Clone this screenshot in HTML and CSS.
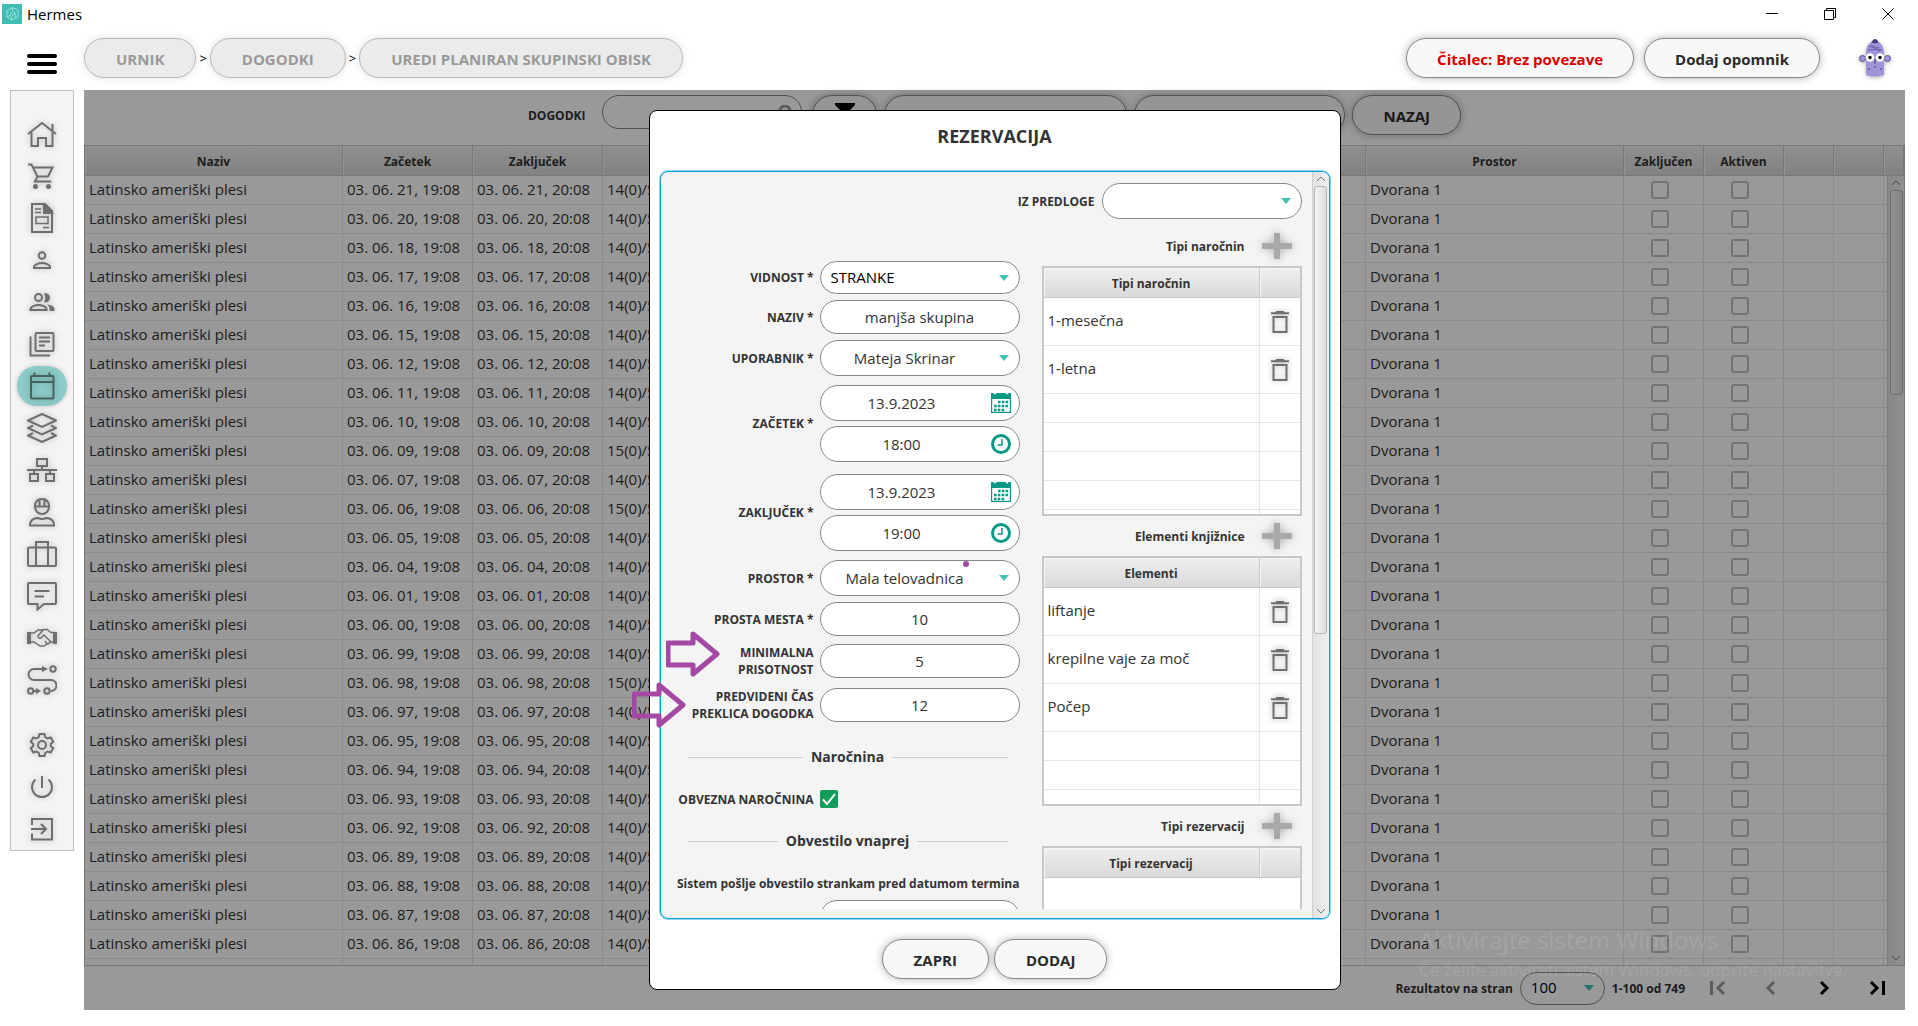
FILE: index.html
```html
<!doctype html>
<html lang="sl">
<head>
  <meta charset="UTF-8">
  <title>Hermes</title>
  <meta name="viewport" content="width=device-width, initial-scale=1">
  <link rel="stylesheet" href="styles.css">
</head>
<body>

  <!-- icons -->
  <svg class="sprite" aria-hidden="true">
    <symbol id="trash" viewBox="0 0 18 22">
      <path d="M0 1.2h5V0h8v1.2h5v2H0z" fill="#6e6e6e"/>
      <path d="M2.5 6h13v15h-13z" fill="none" stroke="#6e6e6e" stroke-width="2"/>
    </symbol>
    <symbol id="plus" viewBox="0 0 30 26">
      <path d="M12 0h6v26h-6z" fill="#a9a9a9"/>
      <rect y="10" width="30" height="6" rx="1" fill="#a9a9a9"/>
    </symbol>
    <symbol id="date" viewBox="0 0 20 20">
      <path d="M0 0h2.5a1.4 1.4 0 0 0 2.8 0h9.4a1.4 1.4 0 0 0 2.8 0H20v20H0z" fill="#069a85"/>
      <path d="M1.2 6h17.6v12.8H1.2z" fill="#fff"/>
      <path d="M7 9h11M3 13h15M3 17h11" stroke="#069a85" stroke-width="2.6" stroke-dasharray="2.6 1.2"/>
    </symbol>
    <symbol id="time" viewBox="0 0 20 20">
      <circle cx="10" cy="10" r="8.5" fill="none" stroke="#069a85" stroke-width="3"/>
      <path d="M11 5v6H6.500" fill="none" stroke="#069a85" stroke-width="1.500"/>
    </symbol>
  </svg>

  <header class="titlebar">
    <svg class="logo" viewBox="0 0 20 20">
      <path d="M0 0h20v20H0z" fill="#3fbdb5"/>
      <path d="M10.500 3.500L16 6v7l-3 1.500V9l-2.500-2zM10.500 3.500L5 6.500V13l4-2V8M5 13l4.500 3v-3.500L13 9M9.500 16l3-1.500" fill="none" stroke="#b4e6e3" stroke-width=".8"/>
    </svg>
    <span class="app-name">Hermes</span>
    <button type="button" class="win" aria-label="Pomanjšaj"><svg viewBox="0 0 12 12"><path d="M0 5.500h12"/></svg></button>
    <button type="button" class="win" aria-label="Obnovi"><svg viewBox="0 0 12 12"><path d="M.5 2.500h9v9h-9zM2.500 2.500v-2h9v9h-2"/></svg></button>
    <button type="button" class="win" aria-label="Zapri okno"><svg viewBox="0 0 12 12"><path d="M.5.5l11 11M11.500.5l-11 11"/></svg></button>
  </header>

  <div class="topbar">
    <button type="button" class="burger" aria-label="Meni"><i></i><i></i><i></i></button>
    <nav class="crumbs">
      <button type="button" class="pill" disabled>URNIK</button>
      <span>&gt;</span>
      <button type="button" class="pill" disabled>DOGODKI</button>
      <span>&gt;</span>
      <button type="button" class="pill" disabled>UREDI PLANIRAN SKUPINSKI OBISK</button>
    </nav>
    <button type="button" class="pill alert">Čitalec: Brez povezave</button>
    <button type="button" class="pill">Dodaj opomnik</button>
    <svg class="avatar" viewBox="0 0 32 38">
      <circle cx="3.500" cy="19.500" r="3" fill="#a093d8" stroke="#5b4f96"/>
      <circle cx="28.500" cy="19.500" r="3" fill="#a093d8" stroke="#5b4f96"/>
      <path d="M7 36V14C7 7 11 2 16 2s9 5 9 12v22q-9 3-18 0z" fill="#a093d8"/>
      <path d="M12.500 3.500Q14 0 16 0t3.500 3.500q-3.500 1.500-7 0z" fill="#463c7c"/>
      <path d="M9 7q6 1 12 5M9 11q7-1 14 0M12 6q5 3 8 3" fill="none" stroke="#6a5da8"/>
      <circle cx="11" cy="18.500" r="4.300" fill="#fff"/>
      <circle cx="21" cy="18.500" r="4.300" fill="#fff"/>
      <circle cx="11" cy="18.500" r="1.700"/>
      <circle cx="21" cy="18.500" r="1.700"/>
      <path d="M16 20v5M15 28h2M9 29l2 2M23 29l-2 2" stroke="#463c7c"/>
    </svg>
  </div>

  <div class="layout">
    <nav class="sidebar">
      <a href="#" aria-label="Domov"><svg viewBox="0 0 30 30"><path d="M1 15L15 4l14 11M4.500 13.500V27H11v-8h8v8h6.500V13.500M25.500 5v7"/></svg></a>
      <a href="#" aria-label="Trgovina"><svg viewBox="0 0 30 30"><path d="M1 3.500h3.500l6 12H21L25.500 6.500H6.500M10.500 15.500L8 20.500h16.500"/><circle class="fill" cx="8.500" cy="25.500" r="1.500"/><circle class="fill" cx="21.500" cy="25.500" r="1.500"/></svg></a>
      <a href="#" aria-label="Računi"><svg viewBox="0 0 30 30"><path d="M5 1h13l7 7v21H5z"/><path class="fill" d="M17 1v9h8z"/><path d="M8 6h6M8 9.500h6M9 14h12v6.500H9zM16 24.500h6" stroke-width="1.500"/></svg></a>
      <a href="#" aria-label="Stranka"><svg viewBox="0 0 30 30"><circle cx="15" cy="10.500" r="3.300"/><path d="M7 23v-1c0-2.500 5-4 8-4s8 1.500 8 4v1z"/></svg></a>
      <a href="#" aria-label="Stranke"><svg viewBox="0 0 30 30"><circle cx="11.500" cy="10.500" r="3.500"/><path d="M3.500 23v-1c0-2.500 5-4 8-4s8 1.500 8 4v1z"/><path class="fill" d="M17 6.500a4.500 4.500 0 1 1 0 8.500q2.500-4 0-8.500zM20.500 17.500c4 .5 7 2.500 7 4.500v2h-5q.5-4-2-6.500z" stroke="none"/></svg></a>
      <a href="#" aria-label="Knjižnica"><svg viewBox="0 0 30 30"><rect x="8.500" y="4" width="18" height="18" rx="1"/><path d="M3.500 7.500V26.500h19.500M12 8.500h11M12 12.500h11M12 16.500h6"/></svg></a>
      <a href="#" class="active" aria-label="Urnik"><svg viewBox="0 0 30 30"><rect x="4" y="5" width="22.500" height="22.500" rx="1"/><path d="M4 11h22.500M7.500 5V1.500M22.500 5V1.500"/></svg></a>
      <a href="#" aria-label="Sloji"><svg viewBox="0 0 30 30"><path d="M15 1l14 6.500L15 14 1 7.500zM6 12.500L1 15l14 6.500L29 15l-5-2.500M6 20l-5 2.500L15 29l14-6.500-5-2.500"/></svg></a>
      <a href="#" aria-label="Struktura"><svg viewBox="0 0 30 30"><path d="M10 4h10v7H10zM15 11v4M0 15h30M7 15v4M23 15v4M3 19h8v7H3zM19 19h8v7h-8z"/></svg></a>
      <a href="#" aria-label="Delavci"><svg viewBox="0 0 30 30"><path d="M8 10a7 7 0 1 0 14 0M7 9.500h16M8 9.500C8 4 11 2 15 2s7 2 7 7.500M12.500 3v6M17.500 3v6M3 28.500c0-5 2-7.500 8-7.500q4 2 8 0c6 0 8 2.500 8 7.500z"/></svg></a>
      <a href="#" aria-label="Paketi"><svg viewBox="0 0 30 30"><rect x="1" y="8.500" width="28" height="18.500" rx="1"/><path d="M9 27V3h12v24"/></svg></a>
      <a href="#" aria-label="Sporočila"><svg viewBox="0 0 30 30"><path d="M2 2h26a1 1 0 0 1 1 1v19a1 1 0 0 1-1 1H17l-6.500 5.500V23H2a1 1 0 0 1-1-1V3a1 1 0 0 1 1-1zM7.500 10h15M7.500 15.500h9.500"/></svg></a>
      <a href="#" aria-label="Partnerji"><svg viewBox="0 0 30 30"><path class="fill" d="M0 9h4v12H0zM26 9h4v12h-4z" stroke="none"/><path d="M4 10h3l4-3h5l-5 6q0 3 3 2l3-3 6 6q0 3-3 3l-3 2h-4l-6-4H4M14 8l3-1.500h3l4 3h3M18 18l2 3M26 19h-3" stroke-width="1.500"/></svg></a>
      <a href="#" aria-label="Proces"><svg viewBox="0 0 30 30"><path d="M17 4H7a5.500 5.500 0 0 0 0 11h17a5.500 5.500 0 0 1 0 11M7 26h3"/><circle cx="26" cy="4" r="2.700"/><circle cx="3.700" cy="26" r="2.700"/><circle cx="20" cy="26" r="2.700"/><path class="fill" d="M15 1l6 3-6 3zM9 23l5 3-5 3z" stroke="none"/></svg></a>
      <a href="#" class="lower" aria-label="Nastavitve"><svg viewBox="0 0 30 30"><path d="M12.500 4h5l.8 3.200 2.200 1.300 3.200-1 2.500 4.300-2.400 2.200v2l2.400 2.200-2.500 4.300-3.200-1-2.200 1.300-.8 3.200h-5l-.8-3.200-2.200-1.300-3.200 1-2.500-4.300L6.200 16v-2l-2.400-2.200 2.500-4.300 3.200 1 2.200-1.300z"/><circle cx="15" cy="15" r="4"/></svg></a>
      <a href="#" aria-label="Izklop"><svg viewBox="0 0 30 30"><path d="M15 4v12M8.500 7.500a10 10 0 1 0 13 0"/></svg></a>
      <a href="#" aria-label="Odjava"><svg viewBox="0 0 30 30"><path d="M5 11V5h20v20.500H5v-6M4 15h15M14 10l5 5-5 5"/></svg></a>
    </nav>

    <main class="content">
      <div class="toolbar">
        <label class="label" for="search">DOGODKI</label>
        <span class="search">
          <input type="text" id="search">
          <svg viewBox="0 0 16 16"><circle cx="8" cy="6" r="5"/><path d="M11 10l4 5"/></svg>
        </span>
        <button type="button" class="pill filter" aria-label="Filter"><svg viewBox="0 0 20 20"><path d="M0 0h20v2l-8 8v8l-4-3v-5L0 2z"/></svg></button>
        <button type="button" class="pill wide" aria-label="Stanje"></button>
        <button type="button" class="pill mid" aria-label="Izvoz"></button>
        <button type="button" class="pill">NAZAJ</button>
      </div>

      <div class="events">
        <table>
          <colgroup>
            <col class="c-name"><col class="c-time"><col class="c-time"><col><col class="c-name">
            <col class="c-check"><col class="c-check"><col class="c-tool"><col class="c-tool"><col class="c-end">
          </colgroup>
          <thead>
            <tr>
              <th>Naziv</th><th>Začetek</th><th>Zaključek</th><th></th><th>Prostor</th>
              <th>Zaključen</th><th>Aktiven</th><th></th><th></th><th></th>
            </tr>
          </thead>
          <tbody id="rows"></tbody>
        </table>
        <div class="scrollbar">
          <svg viewBox="0 0 10 6"><path d="M1 5l4-4 4 4"/></svg>
          <div class="thumb"></div>
          <svg viewBox="0 0 10 6"><path d="M1 1l4 4 4-4"/></svg>
        </div>
      </div>

      <div class="pager">
        <label class="label" for="per-page">Rezultatov na stran</label>
        <span class="select small"><select id="per-page"><option>100</option></select></span>
        <span class="label">1-100 od 749</span>
        <button type="button" disabled aria-label="Prva stran"><svg viewBox="0 0 16 16"><path d="M1.500 1v14M14 2L8 8l6 6"/></svg></button>
        <button type="button" disabled aria-label="Prejšnja stran"><svg viewBox="0 0 16 16"><path d="M11 2L5 8l6 6"/></svg></button>
        <button type="button" aria-label="Naslednja stran"><svg viewBox="0 0 16 16"><path d="M5 2l6 6-6 6"/></svg></button>
        <button type="button" aria-label="Zadnja stran"><svg viewBox="0 0 16 16"><path d="M14.500 1v14M2 2l6 6-6 6"/></svg></button>
      </div>

      <div class="overlay">
        <form class="modal">
          <h1>REZERVACIJA</h1>
          <div class="pane">
            <div class="pane-body">
              <div class="template">
                <label class="label" for="template">IZ PREDLOGE</label>
                <span class="select"><select id="template"><option></option></select></span>
              </div>

              <div class="fields">
                <div class="field">
                  <label class="label" for="visibility">VIDNOST *</label>
                  <span class="select small left"><select id="visibility"><option>STRANKE</option></select></span>
                </div>
                <div class="field">
                  <label class="label" for="name">NAZIV *</label>
                  <input type="text" id="name" value="manjša skupina">
                </div>
                <div class="field">
                  <label class="label" for="user">UPORABNIK *</label>
                  <span class="select"><select id="user"><option>Mateja Skrinar</option></select></span>
                </div>
                <div class="field period">
                  <label class="label" for="start">ZAČETEK *</label>
                  <div class="stack">
                    <span class="picker"><input type="text" id="start" value="13.9.2023"><svg><use href="#date"/></svg></span>
                    <span class="picker"><input type="text" aria-label="Ura začetka" value="18:00"><svg><use href="#time"/></svg></span>
                  </div>
                </div>
                <div class="field period">
                  <label class="label" for="end">ZAKLJUČEK *</label>
                  <div class="stack">
                    <span class="picker"><input type="text" id="end" value="13.9.2023"><svg><use href="#date"/></svg></span>
                    <span class="picker"><input type="text" aria-label="Ura zaključka" value="19:00"><svg><use href="#time"/></svg></span>
                  </div>
                </div>
                <div class="field">
                  <label class="label" for="room">PROSTOR *</label>
                  <span class="select"><select id="room"><option>Mala telovadnica</option></select></span>
                </div>
                <div class="field">
                  <label class="label" for="places">PROSTA MESTA *</label>
                  <input type="text" id="places" value="10">
                </div>
                <div class="field double">
                  <label class="label" for="minimum">MINIMALNA<br>PRISOTNOST</label>
                  <input type="text" id="minimum" value="5">
                </div>
                <div class="field double">
                  <label class="label" for="cancel">PREDVIDENI ČAS<br>PREKLICA DOGODKA</label>
                  <input type="text" id="cancel" value="12">
                </div>
                <h2>Naročnina</h2>
                <div class="field">
                  <label class="label" for="required">OBVEZNA NAROČNINA</label>
                  <span class="tick"><input type="checkbox" id="required" checked><svg viewBox="0 0 18 18"><path d="M3 9.500l4 4.500 8-10"/></svg></span>
                </div>
                <h2>Obvestilo vnaprej</h2>
                <label class="label note" for="notice">Sistem pošlje obvestilo strankam pred datumom termina</label>
                <div class="field">
                  <input type="text" id="notice">
                </div>
              </div>

              <div class="lists">
                <div class="list-head"><span class="label">Tipi naročnin</span><button type="button" aria-label="Dodaj tip naročnine"><svg><use href="#plus"/></svg></button></div>
                <div class="list">
                  <table>
                    <thead><tr><th>Tipi naročnin</th><th class="c-del"></th></tr></thead>
                    <tbody>
                      <tr class="item"><td>1-mesečna</td><td><button type="button" aria-label="Izbriši"><svg><use href="#trash"/></svg></button></td></tr>
                      <tr class="item"><td>1-letna</td><td><button type="button" aria-label="Izbriši"><svg><use href="#trash"/></svg></button></td></tr>
                      <tr><td></td><td></td></tr>
                      <tr><td></td><td></td></tr>
                      <tr><td></td><td></td></tr>
                      <tr><td></td><td></td></tr>
                      <tr><td></td><td></td></tr>
                    </tbody>
                  </table>
                </div>

                <div class="list-head"><span class="label">Elementi knjižnice</span><button type="button" aria-label="Dodaj element"><svg><use href="#plus"/></svg></button></div>
                <div class="list">
                  <table>
                    <thead><tr><th>Elementi</th><th class="c-del"></th></tr></thead>
                    <tbody>
                      <tr class="item"><td>liftanje</td><td><button type="button" aria-label="Izbriši"><svg><use href="#trash"/></svg></button></td></tr>
                      <tr class="item"><td>krepilne vaje za moč</td><td><button type="button" aria-label="Izbriši"><svg><use href="#trash"/></svg></button></td></tr>
                      <tr class="item"><td>Počep</td><td><button type="button" aria-label="Izbriši"><svg><use href="#trash"/></svg></button></td></tr>
                      <tr><td></td><td></td></tr>
                      <tr><td></td><td></td></tr>
                      <tr><td></td><td></td></tr>
                    </tbody>
                  </table>
                </div>

                <div class="list-head"><span class="label">Tipi rezervacij</span><button type="button" aria-label="Dodaj tip rezervacije"><svg><use href="#plus"/></svg></button></div>
                <div class="list">
                  <table>
                    <thead><tr><th>Tipi rezervacij</th><th class="c-del"></th></tr></thead>
                  </table>
                </div>
              </div>
            </div>
            <div class="scrollbar">
              <svg viewBox="0 0 10 6"><path d="M1 5l4-4 4 4"/></svg>
              <div class="thumb"></div>
              <svg viewBox="0 0 10 6"><path d="M1 1l4 4 4-4"/></svg>
            </div>
          </div>
          <div class="actions">
            <button type="button" class="pill">ZAPRI</button>
            <button type="button" class="pill">DODAJ</button>
          </div>

          <!-- hand-drawn marks -->
          <svg class="mark mark-min" viewBox="0 0 54 46"><path d="M2 12h25V3l24 20-24 20v-9H2z"/></svg>
          <svg class="mark mark-cancel" viewBox="0 0 54 46"><path d="M2 12h25V3l24 20-24 20v-9H2z"/></svg>
          <i class="mark mark-dot"></i>
        </form>
      </div>
    </main>
  </div>

  <div class="activate">
    <p class="big">Aktivirajte sistem Windows</p>
    <p>Če želite aktivirati sistem Windows, odprite nastavitve.</p>
  </div>

  <script src="script.js"></script>
</body>
</html>
```

FILE: styles.css
```css
* {
  box-sizing: border-box;
}

body {
  margin: 0;
  height: 100vh;
  display: flex;
  flex-direction: column;
  overflow: hidden;
  background: #fff;
  color: #333;
  font-family: "Open Sans", "Noto Sans", sans-serif;
  font-size: 15px;
}

button, input, select {
  font: inherit;
  color: inherit;
  margin: 0;
}

button {
  border: 0;
  padding: 0;
  background: none;
}

table {
  width: 100%;
  table-layout: fixed;
  border-collapse: separate;
  border-spacing: 0;
}

.sprite {
  position: absolute;
  width: 0;
  height: 0;
}

.label {
  font-size: 12px;
  font-weight: bold;
  line-height: 17px;
  text-align: right;
}

/* window title */

.titlebar {
  display: flex;
  align-items: center;
  height: 28px;
  padding: 0 16px 0 2px;
  color: #000;
}

.logo {
  width: 20px;
  height: 20px;
}

.app-name {
  flex: 1;
  padding-left: 5px;
}

.win {
  width: 28px;
  height: 28px;
  margin-left: 30px;
}

.win svg {
  display: block;
  width: 12px;
  height: 12px;
  margin: 0 auto;
  fill: none;
  stroke: #000;
}

/* top bar */

.topbar {
  display: flex;
  align-items: center;
  height: 62px;
  padding: 0 27px 2px;
}

.burger {
  display: flex;
  flex-direction: column;
  gap: 4px;
  width: 30px;
  margin: 12px 27px 0 0;
}

.burger i {
  height: 4px;
  border-radius: 2px;
  background: #000;
}

.crumbs {
  flex: 1;
  display: flex;
  align-items: center;
  gap: 3px;
  font-size: 13px;
  color: #000;
}

.pill {
  height: 40px;
  padding: 2px 30px 0;
  border: 1px solid #888;
  border-radius: 20px;
  background: #f8f8f8;
  box-shadow: 0 0 8px rgba(0, 0, 0, 0.3);
  font-size: 15px;
  font-weight: bold;
  color: #2b2b2b;
  white-space: nowrap;
}

.pill:disabled {
  padding: 2px 31px 0;
  border-color: #b9b9b9;
  background: #ebebeb;
  box-shadow: 0 0 8px rgba(0, 0, 0, 0.12);
  color: #999;
}

.topbar > .pill {
  margin-left: 10px;
}

.topbar > .alert {
  color: #d90000;
}

.avatar {
  width: 32px;
  height: 38px;
  margin-left: 39px;
  filter: drop-shadow(0 1px 2px rgba(0, 0, 0, 0.3));
}

/* side navigation */

.layout {
  flex: 1;
  min-height: 0;
  display: flex;
  align-items: flex-start;
  gap: 10px;
  padding: 0 13px 16px 10px;
}

.sidebar {
  width: 64px;
  padding-top: 22px;
  border: 1px solid #c0c0c0;
  background: #f4f4f4;
}

.sidebar a {
  display: flex;
  align-items: center;
  justify-content: center;
  width: 50px;
  height: 40px;
  margin: 1px auto;
  border-radius: 20px;
  color: #6e6e6e;
}

.sidebar a + a {
  margin-top: 2px;
}

.sidebar a + .lower {
  margin-top: 25px;
}

.sidebar .active {
  background: #8ccbc8;
  box-shadow: 0 0 5px rgba(0, 0, 0, 0.2);
  color: #44635f;
}

.sidebar svg {
  width: 30px;
  height: 30px;
  fill: none;
  stroke: currentColor;
  stroke-width: 2;
  filter: drop-shadow(0 0 3px rgba(0, 0, 0, 0.25));
}

.sidebar .fill {
  fill: currentColor;
}

/* events list */

.content {
  position: relative;
  flex: 1;
  min-width: 0;
  height: 100%;
  display: flex;
  flex-direction: column;
}

.toolbar {
  display: flex;
  justify-content: center;
  align-items: flex-start;
  gap: 7px;
  height: 55px;
  padding-top: 5px;
}

.toolbar .label {
  padding: 12px 10px 0 0;
}

input[type="text"],
select {
  display: block;
  width: 200px;
  height: 34px;
  padding: 0 12px;
  border: 1px solid #888;
  border-radius: 17px;
  background: #fff;
  text-align: center;
}

.search {
  position: relative;
  margin-right: 3px;
}

.search svg {
  position: absolute;
  top: 10px;
  right: 9px;
  width: 16px;
  height: 16px;
  fill: none;
  stroke: #999;
  stroke-width: 3;
}

.toolbar .filter {
  width: 65px;
  padding: 0;
}

.filter svg {
  width: 20px;
  height: 20px;
}

.toolbar .wide {
  width: 243px;
}

.toolbar .mid {
  width: 211px;
}

.events {
  position: relative;
  flex: 1;
  min-height: 0;
  overflow: hidden;
  border: 1px solid #c8c8c8;
}

.c-name { width: 258px; }
.c-time { width: 130px; }
.c-check { width: 80px; }
.c-tool { width: 50px; }
.c-end { width: 20px; }

th {
  height: 30px;
  padding: 2px 0 0;
  border-right: 1px solid #c8c8c8;
  border-bottom: 1px solid #c8c8c8;
  background: linear-gradient(#efefef, #d9d9d9);
  box-shadow: inset 1px 1px 0 #f5f5f5;
  font-size: 12px;
}

td {
  height: 29px;
  padding: 0 4px 3px;
  border-right: 1px solid #e6e6e6;
  border-bottom: 1px solid #e6e6e6;
  line-height: 20px;
  white-space: nowrap;
  overflow: hidden;
}

.events input {
  appearance: none;
  display: block;
  width: 18px;
  height: 18px;
  margin: 2px 0 0 23px;
  border: 2px solid #c0c0c0;
  border-radius: 3px;
}

.scrollbar {
  display: flex;
  flex-direction: column;
  align-items: center;
  width: 17px;
  border-left: 1px solid #d0d0d0;
  background: linear-gradient(90deg, #e2e2e2, #efefef);
}

.scrollbar svg {
  width: 10px;
  height: 6px;
  margin: 4px 0;
  fill: none;
  stroke: #777;
}

.scrollbar svg:last-child {
  margin-top: auto;
}

.thumb {
  width: 13px;
  height: 60%;
  border: 1px solid #b4b4b4;
  border-radius: 3px;
  background: linear-gradient(90deg, #f4f4f4, #dcdcdc);
}

.events .scrollbar {
  position: absolute;
  top: 30px;
  right: 0;
  bottom: 0;
}

.events .thumb {
  height: 26%;
}

.pager {
  display: flex;
  align-items: center;
  justify-content: flex-end;
  height: 44px;
  padding-right: 20px;
  gap: 7px;
}

.pager select {
  width: 85px;
}

.pager button {
  width: 16px;
  height: 16px;
  margin-left: 30px;
}

.pager .label + button {
  margin-left: 18px;
}

.pager svg {
  display: block;
  fill: none;
  stroke: #000;
  stroke-width: 3;
}

.pager button:disabled svg {
  stroke: #999;
}

/* drop-downs and pickers */

.select,
.picker {
  position: relative;
  display: block;
}

.select select,
.picker input[type="text"] {
  appearance: none;
  height: 36px;
  padding: 0 30px 0 0;
  border-radius: 18px;
  text-align-last: center;
}

.select::after {
  content: "";
  position: absolute;
  top: 50%;
  right: 11px;
  margin-top: -3px;
  border: 5px solid transparent;
  border-top: 6px solid #45bdb3;
  border-bottom: 0;
}

.select.small select {
  height: 33px;
  padding: 0 10px 2px;
  text-align-last: left;
  color: #000;
}

.picker input[type="text"] {
  padding-right: 36px;
  text-align-last: auto;
}

.picker svg {
  position: absolute;
  top: 8px;
  right: 9px;
  width: 20px;
  height: 20px;
}

/* reservation dialog */

.overlay {
  position: absolute;
  inset: 0;
  display: flex;
  justify-content: center;
  padding: 20px;
  background: rgba(0, 0, 0, 0.4);
}

.modal {
  position: relative;
  display: flex;
  flex-direction: column;
  width: 38%;
  min-width: 692px;
  padding: 0 10px 10px;
  border: 1px solid #000;
  border-radius: 8px;
  background: #fff;
}

h1 {
  margin: 0;
  padding: 13px 0 23px;
  font-size: 18px;
  line-height: 24px;
  text-align: center;
}

.pane {
  flex: 1;
  min-height: 0;
  display: flex;
  overflow: hidden;
  border: 1px solid #0a9fd6;
  border-radius: 8px;
  background: #f4f4f4;
  box-shadow: 0 0 0 1px #8fd6ef;
}

.pane-body {
  flex: 1;
  display: grid;
  grid-template-columns: 1fr 260px;
  grid-template-rows: 36px 1fr;
  gap: 7px 22px;
  margin-bottom: 9px;
  padding: 11px 10px 0 15px;
  overflow: hidden;
}

.template {
  grid-column: 1 / 3;
  display: flex;
  justify-content: flex-end;
  align-items: center;
  gap: 7px;
}

.fields {
  display: flex;
  flex-direction: column;
  gap: 6px;
  padding-top: 35px;
}

.field {
  display: grid;
  grid-template-columns: 1fr 200px;
  align-items: center;
  gap: 6px;
}

.field > input:first-child {
  grid-column: 2;
}

.period {
  margin: 3px 0;
}

.stack {
  display: grid;
  gap: 5px;
}

.double {
  min-height: 38px;
}

.note {
  line-height: 20px;
}

h2 {
  display: flex;
  align-items: center;
  gap: 8px;
  margin: 17px 12px;
  font-size: 14px;
  line-height: 20px;
}

h2::before,
h2::after {
  content: "";
  flex: 1;
  border-top: 1px solid #ccc;
}

.tick {
  position: relative;
  height: 18px;
}

.tick input {
  appearance: none;
  display: block;
  width: 18px;
  height: 18px;
  border-radius: 2px;
  background: #129d58;
}

.tick svg {
  position: absolute;
  top: 0;
  left: 0;
  width: 18px;
  height: 18px;
  fill: none;
  stroke: #fff;
  stroke-width: 2;
}

.list-head {
  display: flex;
  justify-content: flex-end;
  align-items: center;
  gap: 17px;
  height: 40px;
  padding-right: 10px;
}

.list-head svg {
  display: block;
  width: 30px;
  height: 26px;
  filter: drop-shadow(0 0 4px rgba(0, 0, 0, 0.3));
}

.list {
  height: 250px;
  overflow: hidden;
  border: 2px solid #c8c8c8;
  background: #fff;
}

.c-del {
  width: 41px;
}

.list td,
.list th {
  border-right-width: 0;
}

.list td + td {
  padding-bottom: 0;
  border-left: 1px solid #e6e6e6;
}

.list th + th {
  border-left: 1px solid #c8c8c8;
}

.list .item td {
  height: 48px;
}

.list td button {
  display: block;
}

.list td svg {
  display: block;
  width: 18px;
  height: 22px;
  margin-left: 7px;
  filter: drop-shadow(0 0 3px rgba(0, 0, 0, 0.3));
}

.actions {
  display: flex;
  justify-content: center;
  gap: 5px;
  padding-top: 20px;
}

.actions .pill {
  padding: 2px 31px 0;
}

.mark {
  position: absolute;
}

svg.mark {
  width: 54px;
  height: 46px;
  fill: none;
  stroke: #a349a4;
  stroke-width: 5;
  stroke-linejoin: round;
}

.mark-min {
  top: 520px;
  left: 16px;
}

.mark-cancel {
  top: 571px;
  left: -18px;
}

.mark-dot {
  top: 450px;
  left: 313px;
  width: 6px;
  height: 6px;
  border-radius: 3px;
  background: #a349a4;
}

/* system notice */

.activate {
  position: absolute;
  right: 73px;
  bottom: 42px;
  width: 426px;
  color: rgba(255, 255, 255, 0.12);
  pointer-events: none;
}

.activate p {
  margin: 0;
  font-size: 17px;
  line-height: 28px;
  white-space: nowrap;
}

.activate .big {
  font-size: 24px;
  line-height: 32px;
}
```

FILE: script.js
```javascript
var events = [
  ["21", 14], ["20", 14], ["18", 14], ["17", 14], ["16", 14], ["15", 14],
  ["12", 14], ["11", 14], ["10", 14], ["09", 15], ["07", 14], ["06", 15],
  ["05", 14], ["04", 14], ["01", 14], ["00", 14], ["99", 14], ["98", 15],
  ["97", 14], ["95", 14], ["94", 14], ["93", 14], ["92", 14], ["89", 14],
  ["88", 14], ["87", 14], ["86", 14]
];

var html = "";

events.forEach(function (event) {
  var date = "03. 06. " + event[0];
  html += "<tr>" +
    "<td>Latinsko ameriški plesi</td>" +
    "<td>" + date + ", 19:08</td>" +
    "<td>" + date + ", 20:08</td>" +
    "<td>" + event[1] + "(0)/50</td>" +
    "<td>Dvorana 1</td>" +
    "<td><input type=\"checkbox\" aria-label=\"Zaključen\"></td>" +
    "<td><input type=\"checkbox\" aria-label=\"Aktiven\"></td>" +
    "<td></td><td></td><td></td>" +
    "</tr>";
});

// start of the next row, cut off by the table edge
html += "<tr>" + "<td></td>".repeat(10) + "</tr>";

document.querySelector("#rows").innerHTML = html;
```
